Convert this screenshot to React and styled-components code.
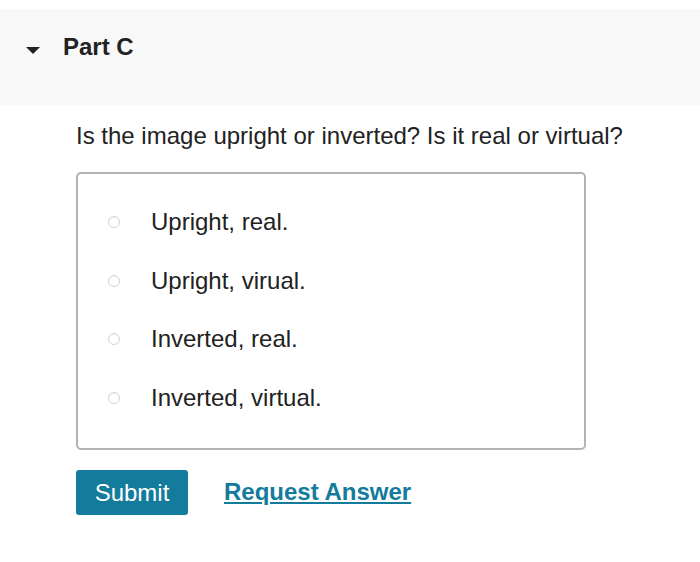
import React from 'react'
import styled, { createGlobalStyle } from 'styled-components'

const GlobalStyle = createGlobalStyle`
  body {
    margin: 0;
    background: #fff;
    font-family: "Liberation Sans", Arial, sans-serif;
    color: #222;
  }
`

const Page = styled.div`
  padding-top: 9px;
  width: 700px;
`

const Header = styled.div`
  background: #f8f8f8;
  height: 96px;
  display: flex;
  align-items: center;
  padding: 0 0 21px 26px;
  box-sizing: border-box;
`

const Caret = styled.span`
  width: 0;
  height: 0;
  border-left: 7px solid transparent;
  border-right: 7px solid transparent;
  border-top: 7px solid #222;
  margin-top: 7px;
  margin-right: 23px;
`

const Title = styled.h2`
  margin: 0;
  font-size: 24px;
  line-height: 28px;
  font-weight: bold;
  color: #222;
`

const Body = styled.div`
  padding: 17px 0 0 76px;
`

const Question = styled.p`
  margin: 0;
  font-size: 24px;
  line-height: 28px;
  color: #222;
`

const Choices = styled.div`
  margin-top: 22px;
  width: 510px;
  height: 278px;
  box-sizing: border-box;
  border: 2px solid #b3b3b3;
  border-radius: 5px;
  padding: 34px 0 0 30px;
  display: flex;
  flex-direction: column;
  gap: 30.5px;
`

const Choice = styled.label`
  display: flex;
  align-items: center;
  font-size: 24px;
  line-height: 28px;
  color: #222;
`

const Radio = styled.span`
  width: 10px;
  height: 10px;
  border-radius: 50%;
  border: 1px solid #d4d4d4;
  background: #fff;
  box-shadow: inset 0 1px 1px rgba(0, 0, 0, 0.06);
  margin-right: 31px;
  flex-shrink: 0;
`

const Actions = styled.div`
  margin-top: 20px;
  display: flex;
  align-items: center;
  gap: 36px;
`

const SubmitButton = styled.button`
  width: 112px;
  height: 45px;
  background: #137b9c;
  color: #fff;
  border: none;
  border-radius: 3px;
  font-family: inherit;
  font-size: 24px;
  padding: 0;
`

const RequestLink = styled.a`
  color: #137b9c;
  font-weight: bold;
  font-size: 24px;
  text-decoration: underline;
  margin-bottom: 2px;
`

const options = ['Upright, real.', 'Upright, virual.', 'Inverted, real.', 'Inverted, virtual.']

export default function App() {
  return (
    <Page>
      <GlobalStyle />
      <Header>
        <Caret />
        <Title>Part C</Title>
      </Header>
      <Body>
        <Question>Is the image upright or inverted? Is it real or virtual?</Question>
        <Choices>
          {options.map((o) => (
            <Choice key={o}>
              <Radio />
              {o}
            </Choice>
          ))}
        </Choices>
        <Actions>
          <SubmitButton>Submit</SubmitButton>
          <RequestLink href="#">Request Answer</RequestLink>
        </Actions>
      </Body>
    </Page>
  )
}
